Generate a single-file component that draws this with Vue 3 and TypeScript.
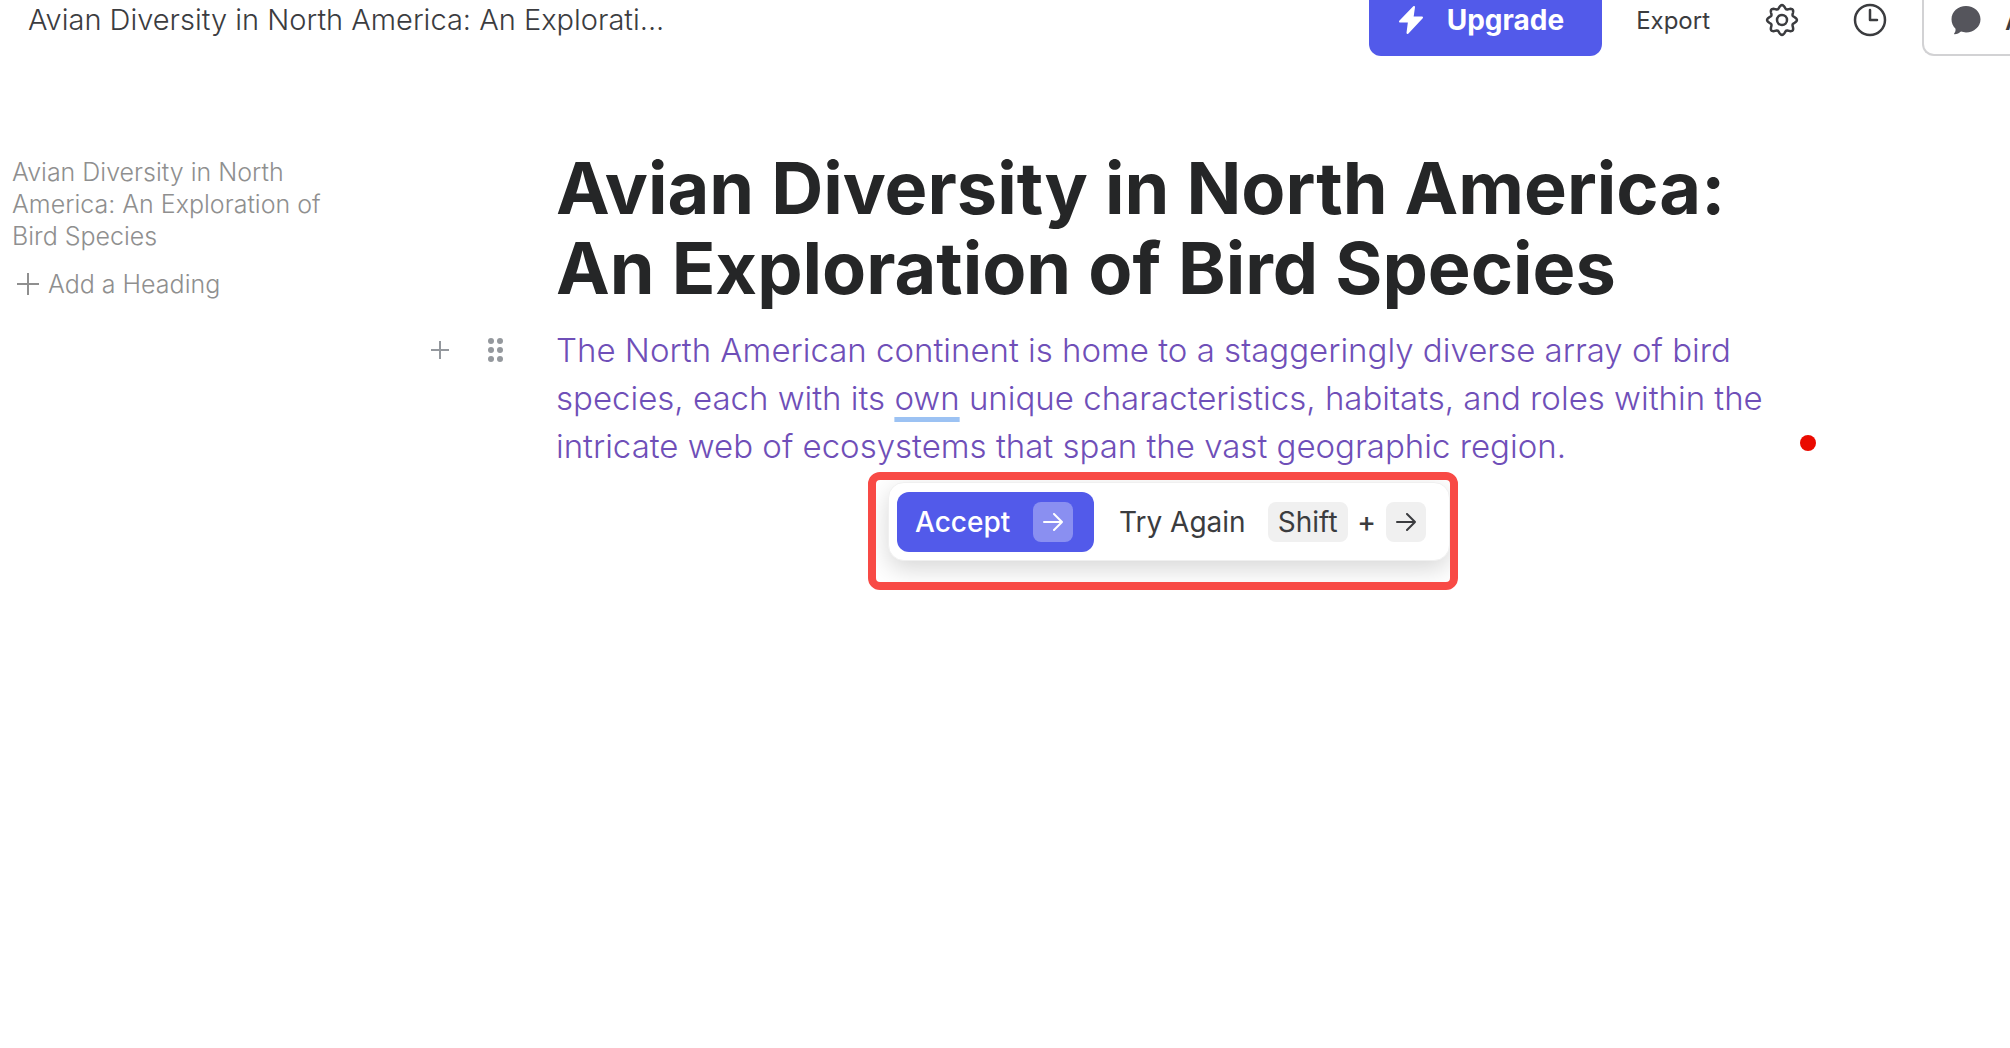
<script setup lang="ts">
const title = 'Avian Diversity in North America: An Exploration of Bird Species'
const shortTitle = 'Avian Diversity in North America: An Explorati...'
const handleDots = [4, 13].flatMap((x) => [3, 12, 21].map((y) => ({ x, y })))

// Outline of the eight-lobed settings gear, sampled around its centre.
const gearPoints = Array.from({ length: 144 }, (_, i) => {
  const angle = (i / 144) * Math.PI * 2
  const radius = 13.2 + 1.7 * Math.cos(8 * angle)
  return `${(18 + radius * Math.cos(angle)).toFixed(2)},${(18 + radius * Math.sin(angle)).toFixed(2)}`
}).join(' ')
</script>

<template>
  <div class="page">
    <header class="topbar">
      <span class="doc-name">{{ shortTitle }}</span>
      <div class="actions">
        <button class="upgrade" type="button">
          <svg width="28" height="30" viewBox="0 0 28 30" aria-hidden="true">
            <path d="M17 2 L3 16.500 H12 L10.500 28 L25 12.500 H15.500 Z" fill="#fff" stroke="#fff" stroke-width="2" stroke-linejoin="round" />
          </svg>
          <span>Upgrade</span>
        </button>
        <button class="plain export" type="button">Export</button>
        <button class="plain gear" type="button" aria-label="Settings">
          <svg width="36" height="36" viewBox="0 0 36 36" fill="none" stroke="#3b3c3f" stroke-width="2.5" stroke-linejoin="round" aria-hidden="true">
            <circle cx="18" cy="18" r="5" />
            <polygon :points="gearPoints" />
          </svg>
        </button>
        <button class="plain clock" type="button" aria-label="History">
          <svg width="36" height="36" viewBox="0 0 36 36" fill="none" stroke="#3b3c3f" stroke-width="2.5" stroke-linecap="round" stroke-linejoin="round" aria-hidden="true">
            <circle cx="18" cy="18" r="15" />
            <path d="M18 8V18H25" />
          </svg>
        </button>
        <button class="chat" type="button">
          <svg width="30" height="30" viewBox="0 0 30 30" aria-hidden="true">
            <path d="M15 1C23 1 29.500 6.800 29.500 14.200S23 27.400 15 27.400C13.200 27.400 11.500 27.100 10 26.600C8.300 28.200 6 29.200 3.700 29.200C3.100 29.200 2.900 28.600 3.300 28.200C4.400 27 4.700 25.400 4.500 23.700C2 21.300 .5 18 .5 14.200C.5 6.800 7 1 15 1Z" fill="#55555c" />
          </svg>
          <span>A</span>
        </button>
      </div>
    </header>

    <div class="body">
      <nav class="outline">
        <a class="outline-link" href="#top">{{ title }}</a>
        <button class="add-heading" type="button">
          <svg width="22" height="22" viewBox="0 0 22 22" stroke="#8f8f8f" stroke-width="2" aria-hidden="true">
            <path d="M0 11H22M11 0V22" />
          </svg>
          <span>Add a Heading</span>
        </button>
      </nav>

      <main class="editor">
        <h1 id="top">Avian Diversity in North America: An&nbsp;Exploration of Bird Species</h1>
        <div class="block">
          <div class="handles">
            <button class="plain" type="button" aria-label="Add block">
              <svg width="18" height="18" viewBox="0 0 18 18" stroke="#94989d" stroke-width="2" aria-hidden="true">
                <path d="M0 9H18M9 0V18" />
              </svg>
            </button>
            <button class="plain" type="button" aria-label="Move block">
              <svg width="17" height="24" viewBox="0 0 17 24" fill="#94989d" aria-hidden="true">
                <circle v-for="dot in handleDots" :key="`${dot.x}-${dot.y}`" :cx="dot.x" :cy="dot.y" r="3" />
              </svg>
            </button>
          </div>
          <p>
            The North American continent is home to a staggeringly diverse array of bird
            species, each with its <u>own</u> unique characteristics, habitats, and roles within the
            intricate web of ecosystems that span the vast geographic region.
          </p>
          <i class="marker"></i>
        </div>

        <div class="frame">
          <div class="card">
            <button class="accept" type="button">
              <span>Accept</span>
              <kbd>
                <svg width="20" height="18" viewBox="0 0 20 18" fill="none" stroke="currentColor" stroke-width="2" stroke-linecap="round" stroke-linejoin="round" aria-hidden="true">
                  <path d="M1 9H19M11 1L19 9L11 17" />
                </svg>
              </kbd>
            </button>
            <button class="plain again" type="button">
              <span class="again-label">Try Again</span>
              <kbd class="word">Shift</kbd>
              <span class="plus">+</span>
              <kbd>
                <svg width="20" height="18" viewBox="0 0 20 18" fill="none" stroke="currentColor" stroke-width="2" stroke-linecap="round" stroke-linejoin="round" aria-hidden="true">
                  <path d="M1 9H19M11 1L19 9L11 17" />
                </svg>
              </kbd>
            </button>
          </div>
        </div>
      </main>
    </div>
  </div>
</template>

<style>
body {
  margin: 0;
  background: #fff;
}
</style>

<style scoped>
.page {
  min-height: 100vh;
  overflow: hidden;
  font-family: Inter, "Liberation Sans", sans-serif;
  color: #3b3c3f;
}

.page * {
  box-sizing: border-box;
}

button {
  font: inherit;
  color: inherit;
  cursor: pointer;
}

svg {
  display: block;
  flex: none;
}

.topbar {
  display: flex;
  justify-content: space-between;
  height: 56px;
  padding-left: 28px;
}

.doc-name {
  font-size: 29px;
  font-weight: 300;
  line-height: 40px;
  white-space: nowrap;
}

.actions {
  display: flex;
  align-items: flex-start;
}

.plain {
  display: flex;
  align-items: center;
  padding: 0;
  border: 0;
  background: none;
}

.actions .plain {
  height: 40px;
}

.upgrade {
  display: flex;
  align-items: center;
  gap: 22px;
  height: 56px;
  padding: 0 38px 16px 28px;
  border: 0;
  border-radius: 0 0 12px 12px;
  background: #525aea;
  color: #fff;
  font-size: 28px;
  font-weight: 700;
}

.export {
  margin-left: 34px;
  font-size: 24px;
}

.gear {
  margin-left: 54px;
}

.clock {
  margin: 0 34px 0 52px;
}

.chat {
  display: flex;
  align-items: center;
  gap: 24px;
  width: 88px;
  height: 56px;
  padding: 0 0 14px 27px;
  border: 2px solid #d2d2d4;
  border-width: 0 0 2px 2px;
  border-radius: 0 0 0 12px;
  background: #fff;
  font-size: 28px;
  font-weight: 500;
  overflow: hidden;
}

.body {
  display: flex;
  padding-top: 92px;
}

.outline {
  flex: none;
  width: 420px;
  padding: 8px 80px 0 12px;
  font-size: 25px;
  font-weight: 300;
  line-height: 32px;
  color: #8f8f8f;
}

.outline-link {
  display: block;
  color: inherit;
  text-decoration: none;
}

.add-heading {
  display: flex;
  align-items: center;
  gap: 9px;
  margin-top: 16px;
  padding: 0 0 0 5px;
  border: 0;
  background: none;
}

.editor {
  flex: 1;
  min-width: 0;
}

h1 {
  max-width: 1360px;
  margin: 0 0 18px;
  padding-left: 136px;
  font-size: 72px;
  font-weight: 700;
  line-height: 80px;
  color: #252627;
}

.block {
  display: flex;
}

.handles {
  display: flex;
  flex: none;
  gap: 38px;
  width: 136px;
  height: 48px;
  padding-left: 11px;
}

p {
  width: 1232px;
  margin: 0;
  font-size: 33px;
  font-weight: 300;
  line-height: 48px;
  color: #6f4fb8;
}

u {
  text-decoration: underline 5px #9cc2f3;
  text-underline-offset: 7px;
}

.marker {
  flex: none;
  align-self: flex-end;
  width: 16px;
  height: 16px;
  margin: 0 0 19px 12px;
  border-radius: 50%;
  background: #ea0a00;
}

.frame {
  width: 590px;
  height: 118px;
  margin: 2px 0 0 448px;
  padding: 2px 0 0 12px;
  border: 8px solid #f84a45;
  border-radius: 12px;
  overflow: hidden;
}

.card {
  display: flex;
  align-items: center;
  width: 562px;
  height: 79px;
  padding: 0 8px;
  border: 1px solid #f0f0f0;
  border-radius: 16px;
  background: #fff;
  box-shadow: 0 8px 24px rgba(0, 0, 0, 0.16);
  font-size: 28px;
}

.accept {
  display: flex;
  align-items: center;
  justify-content: space-between;
  width: 197px;
  height: 60px;
  padding: 0 21px 0 18px;
  border: 0;
  border-radius: 12px;
  background: #525aea;
  color: #fff;
  font-weight: 500;
}

kbd {
  display: flex;
  align-items: center;
  justify-content: center;
  width: 40px;
  height: 40px;
  border-radius: 8px;
  background: #f0f0f0;
  font: inherit;
}

.accept kbd {
  background: #8a8ff1;
}

.again {
  margin-left: 25px;
}

.word {
  width: 80px;
  margin-left: 22px;
}

.plus {
  width: 38px;
  text-align: center;
  font-weight: 500;
}
</style>
